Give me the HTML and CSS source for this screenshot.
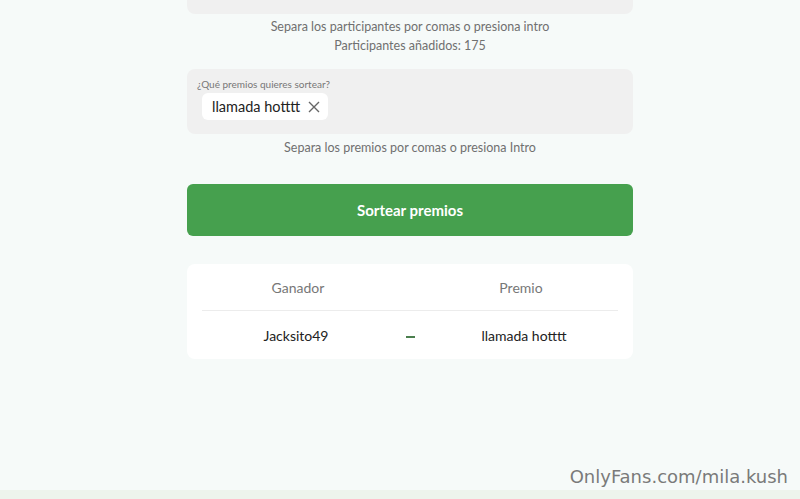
FILE: index.html
```html
<!DOCTYPE html>
<html lang="es">
<head>
    <meta charset="UTF-8">
    <meta name="viewport" content="width=device-width, initial-scale=1.0">
    <title>Sorteo de premios</title>
    <link rel="stylesheet" href="styles.css">
</head>
<body>
    <div class="page">
        <div class="raffle">
            <div class="field field-cut"></div>
            <p class="hint">Separa los participantes por comas o presiona intro</p>
            <p class="hint">Participantes añadidos: 175</p>

            <div class="field prizes">
                <label class="field-label">¿Qué premios quieres sortear?</label>
                <div class="chips">
                    <span class="chip">llamada hotttt
                        <svg class="chip-close" width="12" height="12" viewBox="0 0 12 12"><path d="M1 1 L11 11 M11 1 L1 11" stroke="#666" stroke-width="1.4" fill="none"/></svg>
                    </span>
                </div>
            </div>
            <p class="hint">Separa los premios por comas o presiona Intro</p>

            <button class="draw-btn">Sortear premios</button>

            <div class="results">
                <div class="results-head">
                    <span>Ganador</span>
                    <span></span>
                    <span>Premio</span>
                </div>
                <div class="results-row">
                    <span>Jacksito49</span>
                    <span class="dash"></span>
                    <span>llamada hotttt</span>
                </div>
            </div>
        </div>
    </div>
    <div class="footer-strip"></div>
    <div class="watermark">OnlyFans.com/mila.kush</div>
</body>
</html>
```

FILE: styles.css
```css
body {
    font-family: Lato, "Noto Sans", sans-serif;
    margin: 0;
    padding: 0;
    background: #f6faf9;
    height: 499px;
    overflow: hidden;
    position: relative;
}
.page {
    padding-left: 20px;
    height: 490px;
}
.raffle {
    width: 446px;
    margin: 0 auto;
}
.field {
    background: #f0f0f0;
    border-radius: 8px;
}
.field-cut {
    height: 14px;
    border-radius: 0 0 8px 8px;
}
.hint {
    margin: 0;
    text-align: center;
    font-size: 12.5px;
    line-height: 19px;
    color: #707070;
}
.field-cut + .hint {
    margin-top: 3px;
}
.prizes {
    margin-top: 14px;
    padding: 8px 10px 14px;
    height: 43px;
}
.field-label {
    display: block;
    font-size: 10px;
    line-height: 14px;
    color: #777;
}
.chips {
    margin-top: 2px;
    padding-left: 5px;
}
.chip {
    display: inline-flex;
    align-items: center;
    gap: 8px;
    height: 27px;
    padding: 0 8px 0 10px;
    background: #fff;
    border-radius: 6px;
    font-size: 14.5px;
    color: #222;
}
.prizes + .hint {
    margin-top: 4px;
}
.draw-btn {
    display: block;
    width: 100%;
    height: 52px;
    margin-top: 27px;
    background: #46a04e;
    color: #fff;
    border: none;
    border-radius: 6px;
    font-family: inherit;
    font-size: 15px;
    font-weight: bold;
}
.results {
    margin-top: 28px;
    background: #fff;
    border-radius: 8px;
    padding: 0 15px;
}
.results-head, .results-row {
    display: grid;
    grid-template-columns: 1fr 40px 1fr;
    align-items: center;
    text-align: center;
}
.results-head {
    height: 46px;
    border-bottom: 1px solid #ececec;
    font-size: 14px;
    color: #777;
}
.results-head span:last-child {
    padding-right: 6px;
}
.results-head span:first-child {
    padding-left: 4px;
}
.results-row {
    height: 48px;
    font-size: 14px;
    color: #222;
}
.dash {
    display: block;
    width: 9px;
    height: 2px;
    margin: 4px auto 0;
    background: #4b7f4e;
}
.footer-strip {
    height: 9px;
    background: #edf4ec;
}
.watermark {
    position: absolute;
    right: 12px;
    top: 466px;
    font-family: "DejaVu Sans", sans-serif;
    font-size: 18px;
    color: #7a7a7a;
}
```
